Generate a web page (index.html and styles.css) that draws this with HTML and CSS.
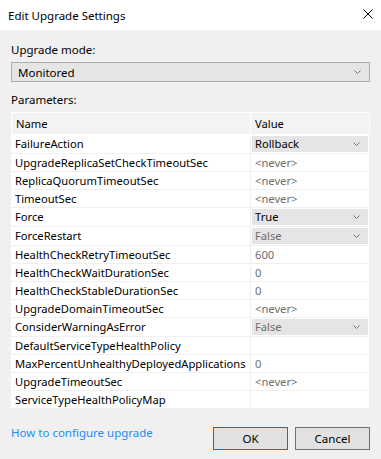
FILE: index.html
```html
<!DOCTYPE html>
<html lang="en">
<head>
	<meta charset="UTF-8">
	<title>Edit Upgrade Settings</title>
	<link rel="stylesheet" href="styles.css">
</head>
<body>
	<div class="dialog">
		<div class="titlebar">
			<span class="title">Edit Upgrade Settings</span>
			<svg class="close" width="10" height="10" viewBox="0 0 10 10"><path d="M0.5 0.5L9.5 9.5M9.5 0.5L0.5 9.5" stroke="#000" stroke-width="1"/></svg>
		</div>
		<div class="content">
			<div class="label">Upgrade mode:</div>
			<div class="combo">
				<span>Monitored</span>
				<svg class="chev" width="7" height="4" viewBox="0 0 7 4"><path d="M0.5 0.5L3.5 3.5L6.5 0.5" fill="none" stroke="#777" stroke-width="1"/></svg>
			</div>
			<div class="label params">Parameters:</div>
			<table class="grid">
				<colgroup><col class="c-name"><col class="c-value"></colgroup>
				<tr class="head"><th>Name</th><th>Value</th></tr>
				<tr><td>FailureAction</td><td><div class="cell-combo">Rollback<svg class="chev" width="7" height="4" viewBox="0 0 7 4"><path d="M0.5 0.5L3.5 3.5L6.5 0.5" fill="none" stroke="#777" stroke-width="1"/></svg></div></td></tr>
				<tr><td>UpgradeReplicaSetCheckTimeoutSec</td><td class="dim">&lt;never&gt;</td></tr>
				<tr><td>ReplicaQuorumTimeoutSec</td><td class="dim">&lt;never&gt;</td></tr>
				<tr><td>TimeoutSec</td><td class="dim">&lt;never&gt;</td></tr>
				<tr><td>Force</td><td><div class="cell-combo">True<svg class="chev" width="7" height="4" viewBox="0 0 7 4"><path d="M0.5 0.5L3.5 3.5L6.5 0.5" fill="none" stroke="#777" stroke-width="1"/></svg></div></td></tr>
				<tr><td>ForceRestart</td><td><div class="cell-combo off">False<svg class="chev" width="7" height="4" viewBox="0 0 7 4"><path d="M0.5 0.5L3.5 3.5L6.5 0.5" fill="none" stroke="#777" stroke-width="1"/></svg></div></td></tr>
				<tr><td>HealthCheckRetryTimeoutSec</td><td class="dim">600</td></tr>
				<tr><td>HealthCheckWaitDurationSec</td><td class="dim">0</td></tr>
				<tr><td>HealthCheckStableDurationSec</td><td class="dim">0</td></tr>
				<tr><td>UpgradeDomainTimeoutSec</td><td class="dim">&lt;never&gt;</td></tr>
				<tr><td>ConsiderWarningAsError</td><td><div class="cell-combo off">False<svg class="chev" width="7" height="4" viewBox="0 0 7 4"><path d="M0.5 0.5L3.5 3.5L6.5 0.5" fill="none" stroke="#777" stroke-width="1"/></svg></div></td></tr>
				<tr><td>DefaultServiceTypeHealthPolicy</td><td></td></tr>
				<tr><td>MaxPercentUnhealthyDeployedApplications</td><td class="dim">0</td></tr>
				<tr><td>UpgradeTimeoutSec</td><td class="dim">&lt;never&gt;</td></tr>
				<tr><td>ServiceTypeHealthPolicyMap</td><td></td></tr>
			</table>
			<div class="footer">
				<a href="" class="link">How to configure upgrade</a>
				<div class="buttons">
					<button class="btn ok">OK</button>
					<button class="btn">Cancel</button>
				</div>
			</div>
		</div>
	</div>
</body>
</html>
```

FILE: styles.css
```css
* {
	margin: 0;
	padding: 0;
	box-sizing: border-box;
}
body {
	width: 381px;
	height: 459px;
	background-color: #f0f0f0;
	font-family: "Noto Sans", "Open Sans", sans-serif;
	font-size: 11.2px;
	color: #000;
	overflow: hidden;
}
.titlebar {
	height: 30px;
	background-color: #fff;
	display: flex;
	align-items: center;
	justify-content: space-between;
	padding: 0 8px 0 8px;
}
.title {
	font-size: 11.5px;
}
.close {
	display: block;
	margin-top: -2px;
}
.content {
	padding: 12px 11px 0 11px;
}
.label {
	height: 16px;
	line-height: 16px;
	font-size: 11.5px;
}
.combo {
	margin-top: 4px;
	height: 20px;
	border: 1px solid #adadad;
	background-color: #e5e5e5;
	display: flex;
	align-items: center;
	justify-content: space-between;
	padding: 0 8px 0 6px;
	font-size: 11.5px;
}
.params {
	margin-top: 10px;
}
.grid {
	margin-top: 4px;
	width: 359px;
	table-layout: fixed;
	border-collapse: collapse;
	border: 1px solid #fff;
	background-color: #fff;
}
.c-name {
	width: 239px;
}
.grid th {
	height: 22px;
	font-weight: normal;
	text-align: left;
	background-color: #f3f3f3;
	padding: 0 4px;
	border-right: 1px solid #fff;
	border-bottom: 1px solid #fff;
}
.grid td {
	height: 18px;
	padding: 0 3px;
	border-bottom: 1px solid #f0f0f0;
	border-right: 1px solid #f0f0f0;
	white-space: nowrap;
	overflow: hidden;
	line-height: 16px;
}
.grid td.dim {
	color: #6d6d6d;
	padding-left: 4px;
}
.grid td:has(.cell-combo) {
	padding: 1px;
}
.cell-combo {
	height: 16px;
	background-color: #e5e5e5;
	display: flex;
	align-items: center;
	justify-content: space-between;
	padding: 0 8px 0 3px;
	line-height: 16px;
}
.cell-combo.off {
	color: #6d6d6d;
}
.footer {
	margin-top: 18px;
	display: flex;
	justify-content: space-between;
	align-items: flex-start;
}
.link {
	display: block;
	color: #1a8cff;
	text-decoration: none;
	line-height: 16px;
	margin-top: -2px;
	font-size: 11.5px;
}
.buttons {
	display: flex;
	gap: 7px;
}
.btn {
	width: 75px;
	height: 23px;
	background-color: #e1e1e1;
	border: 1px solid #707070;
	font-family: "Noto Sans", "Open Sans", sans-serif;
	font-size: 11.5px;
	color: #000;
}
.btn.ok {
	border-color: #0078d7;
}
```
